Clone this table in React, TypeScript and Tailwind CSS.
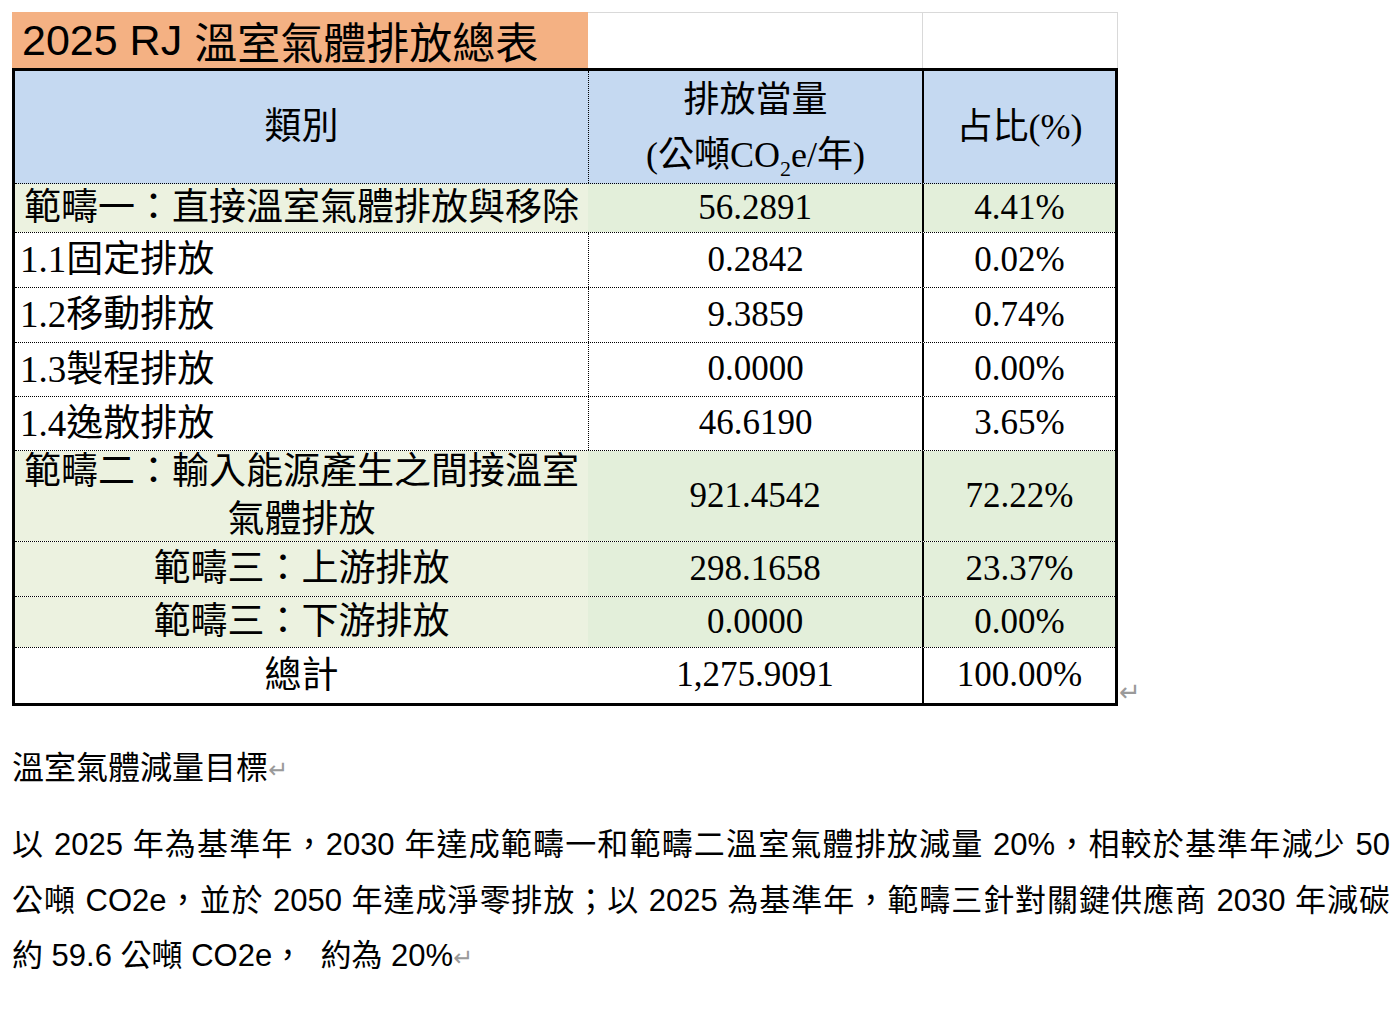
import React from 'react';

type Kind = 'scope' | 'item' | 'total';

type Row = {
  label: React.ReactNode;
  value: string;
  pct: string;
  kind: Kind;
  height: string;
  left?: boolean;
};

const rows: Row[] = [
  { label: '範疇一：直接溫室氣體排放與移除', value: '56.2891', pct: '4.41%', kind: 'scope', height: 'h-[49px]' },
  { label: '1.1固定排放', value: '0.2842', pct: '0.02%', kind: 'item', height: 'h-[55px]', left: true },
  { label: '1.2移動排放', value: '9.3859', pct: '0.74%', kind: 'item', height: 'h-[55px]', left: true },
  { label: '1.3製程排放', value: '0.0000', pct: '0.00%', kind: 'item', height: 'h-[54px]', left: true },
  { label: '1.4逸散排放', value: '46.6190', pct: '3.65%', kind: 'item', height: 'h-[54px]', left: true },
  {
    label: (
      <>
        範疇二：輸入能源產生之間接溫室
        <br />
        氣體排放
      </>
    ),
    value: '921.4542',
    pct: '72.22%',
    kind: 'scope',
    height: 'h-[91px]',
  },
  { label: '範疇三：上游排放', value: '298.1658', pct: '23.37%', kind: 'scope', height: 'h-[55px]' },
  { label: '範疇三：下游排放', value: '0.0000', pct: '0.00%', kind: 'scope', height: 'h-[51px]' },
  { label: '總計', value: '1,275.9091', pct: '100.00%', kind: 'total', height: 'h-[55px]' },
];

function ReturnMark({ className = '' }: { className?: string }) {
  return (
    <span className={`font-['DejaVu_Sans',sans-serif] text-[#9a9a9a] ${className}`}>↵</span>
  );
}

function TableRow({ row, last }: { row: Row; last: boolean }) {
  const green = row.kind === 'scope';

  return (
    <div className={`flex ${row.height} ${last ? '' : 'border-b border-dotted border-black'}`}>
      <div
        className={`w-[573px] flex items-center text-[37px] leading-[48px] ${
          green ? 'bg-[#ecf2e0]' : 'bg-white'
        } ${row.left ? 'justify-start pl-[5px]' : 'justify-center text-center'}`}
      >
        <span>{row.label}</span>
      </div>
      <div
        className={`w-[334px] flex items-center justify-center text-[35px] ${
          green ? 'bg-[#e3efda]' : 'bg-white'
        } ${row.kind === 'item' ? 'border-l border-dotted border-black' : ''}`}
      >
        {row.value}
      </div>
      <div
        className={`w-[193px] flex items-center justify-center text-[35px] border-l-2 border-solid border-black ${
          green ? 'bg-[#e3efda]' : 'bg-white'
        }`}
      >
        {row.pct}
      </div>
    </div>
  );
}

export default function App() {
  return (
    <div className="min-h-screen bg-white pl-[12px] pt-[12px] text-black">
      {/* Title row */}
      <div className="flex w-[1106px] h-[56px]">
        <div className="w-[576px] bg-[#f4b183] flex items-center pl-[10px] whitespace-nowrap text-[43px] leading-none">
          <span className="mr-[12px] font-['Liberation_Sans',sans-serif]">2025 RJ</span>
          <span className="font-['Noto_Sans_CJK_TC',sans-serif]">溫室氣體排放總表</span>
        </div>
        <div className="w-[334px] border-t border-[#d9d9d9]" />
        <div className="w-[196px] border-t border-l border-r border-[#d9d9d9]" />
      </div>

      {/* Table */}
      <div className="flex items-end">
        <div className="w-[1106px] border-[3px] border-black font-['Liberation_Serif','Noto_Sans_CJK_TC',serif]">
          <div className="flex h-[113px] bg-[#c5d9f1] border-b border-dotted border-black">
            <div className="w-[573px] flex items-center justify-center text-[37px]">類別</div>
            <div className="w-[334px] flex flex-col items-center justify-center text-[36px] leading-[55px] border-l border-dotted border-black pt-[2px]">
              <span>排放當量</span>
              <span>
                (公噸CO<sub className="text-[22px] align-[-3px]">2</sub>e/年)
              </span>
            </div>
            <div className="w-[193px] flex items-center justify-center text-[36px] border-l-2 border-solid border-black">
              占比(%)
            </div>
          </div>
          {rows.map((row, i) => (
            <TableRow key={i} row={row} last={i === rows.length - 1} />
          ))}
        </div>
        <ReturnMark className="text-[26px] leading-none ml-[1px] mb-[1px]" />
      </div>

      {/* Reduction targets */}
      <div className="mt-[42px] h-[40px] flex items-center text-[32px] font-['Liberation_Serif','Noto_Sans_CJK_TC',serif]">
        溫室氣體減量目標
        <ReturnMark className="text-[24px] leading-none mt-[4px]" />
      </div>

      <div className="mt-[29px] w-[1378px] text-[31px] leading-[55.5px] font-['Liberation_Sans','Noto_Sans_CJK_TC',sans-serif] whitespace-nowrap">
        <div className="text-justify [text-align-last:justify]">
          以 2025 年為基準年，2030 年達成範疇一和範疇二溫室氣體排放減量 20%，相較於基準年減少 50
        </div>
        <div className="text-justify [text-align-last:justify]">
          公噸 CO2e，並於 2050 年達成淨零排放；以 2025 為基準年，範疇三針對關鍵供應商 2030 年減碳
        </div>
        <div className="whitespace-pre">
          約 59.6 公噸 CO2e，  約為 20%
          <ReturnMark className="text-[24px] leading-none" />
        </div>
      </div>
    </div>
  );
}
